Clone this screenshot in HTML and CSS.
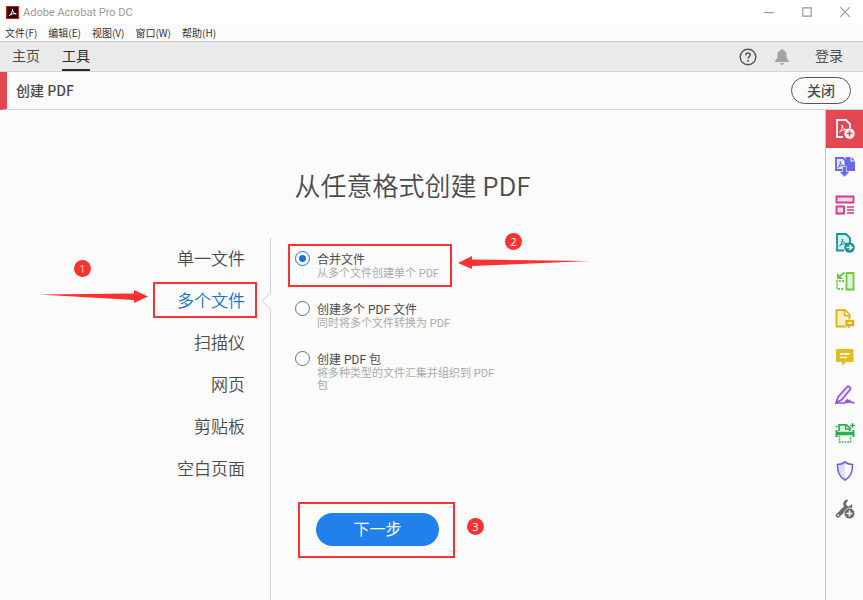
FILE: index.html
```html
<!DOCTYPE html>
<html lang="zh-CN">

<head>
	<meta charset="UTF-8">
	<meta name="viewport" content="width=device-width, initial-scale=1.0">
	<title>Adobe Acrobat Pro DC</title>
	<link rel="stylesheet" href="styles.css">
</head>

<body>
	<header class="titlebar">
		<svg class="app-logo" viewBox="0 0 13 13" aria-hidden="true">
			<rect x=".5" y=".5" width="12" height="12" fill="#2a0808" stroke="#d3201f" />
			<path d="M3 10c2-1.500 3.800-4.400 3.500-7C6 5.500 8.500 8 10.300 8 8.500 7.100 5 7.800 3 10z" fill="none" stroke="#fff" />
		</svg>
		<span class="app-name">Adobe Acrobat Pro DC</span>
		<div class="window-buttons">
			<button type="button" aria-label="最小化"><svg viewBox="0 0 10 10"><path d="M1 5.500h8" /></svg></button>
			<button type="button" aria-label="最大化"><svg viewBox="0 0 10 10"><path d="M1.500 1.500h7v7h-7z" /></svg></button>
			<button type="button" aria-label="关闭窗口"><svg viewBox="0 0 10 10"><path d="M1 1l8 8M9 1L1 9" /></svg></button>
		</div>
	</header>

	<nav class="menubar">
		<button type="button">文件(F)</button>
		<button type="button">编辑(E)</button>
		<button type="button">视图(V)</button>
		<button type="button">窗口(W)</button>
		<button type="button">帮助(H)</button>
	</nav>

	<div class="tabs">
		<a href="#" class="tab">主页</a>
		<a href="#" class="tab active">工具</a>
		<div class="account">
			<button type="button" class="icon-button" aria-label="帮助">
				<svg viewBox="0 0 18 18">
					<circle cx="9" cy="9" r="7.800" fill="none" stroke="#555" stroke-width="1.400" />
					<path d="M6.900 7.200c0-2.900 4.300-2.700 4.300-.2 0 1.500-2.200 1.700-2.200 3.500" fill="none" stroke="#555" stroke-width="1.500" />
					<circle cx="9" cy="12.700" r="1" fill="#555" />
				</svg>
			</button>
			<button type="button" class="icon-button" aria-label="通知">
				<svg viewBox="0 0 18 18">
					<path d="M9 1c-.8 0-1.300.5-1.300 1.300C5.300 2.900 4.500 4.800 4.500 7c0 3.500-.9 4.800-2.500 6v1h14v-1c-1.600-1.200-2.500-2.500-2.500-6 0-2.200-.8-4.100-3.200-4.700C10.300 1.500 9.800 1 9 1zM7.200 15h3.600c0 2.500-3.600 2.500-3.600 0z" fill="#a3a3a3" />
				</svg>
			</button>
			<a href="#" class="login">登录</a>
		</div>
	</div>

	<div class="toolbar">
		<h2>创建 PDF</h2>
		<button type="button" class="close-button">关闭</button>
	</div>

	<main>
		<section class="workspace">
			<h1>从任意格式创建 PDF</h1>
			<div class="columns">
				<nav class="sources">
					<a href="#">单一文件</a>
					<a href="#" class="selected">多个文件
						<span class="mark mark-source"></span>
						<span class="badge badge-source">1</span>
						<svg class="arrow arrow-source" viewBox="0 0 110 14" aria-hidden="true"><path d="M0 4.500L95 3.500V0l14 6.500L95 13V10z" /></svg>
						<svg class="notch" viewBox="0 0 10 18" aria-hidden="true"><path d="M9.500 0v1L1 9l8.500 8v1" /></svg>
					</a>
					<a href="#">扫描仪</a>
					<a href="#">网页</a>
					<a href="#">剪贴板</a>
					<a href="#">空白页面</a>
				</nav>
				<form class="options">
					<div class="option">
						<input type="radio" name="mode" id="merge" checked>
						<label for="merge">合并文件 <small>从多个文件创建单个 PDF</small></label>
						<span class="mark mark-option"></span>
						<span class="badge badge-option">2</span>
						<svg class="arrow arrow-option" viewBox="0 0 132 14" aria-hidden="true"><path d="M132 5L14 3.500V0L0 7l14 6V10z" /></svg>
					</div>
					<div class="option">
						<input type="radio" name="mode" id="multiple">
						<label for="multiple">创建多个 PDF 文件 <small>同时将多个文件转换为 PDF</small></label>
					</div>
					<div class="option">
						<input type="radio" name="mode" id="portfolio">
						<label for="portfolio">创建 PDF 包 <small>将多种类型的文件汇集并组织到 PDF 包</small></label>
					</div>
					<div class="next">
						<button type="submit">下一步</button>
						<span class="mark mark-next"></span>
						<span class="badge badge-next">3</span>
					</div>
				</form>
			</div>
		</section>

		<aside class="tools">
			<button type="button" class="current" aria-label="创建 PDF">
				<svg viewBox="0 0 20 20" stroke="#fff" fill="none">
					<path d="M8 18H2V1h9l4 4v4" stroke-width="1.800" />
					<path d="M4.500 13c2-1.500 3-4 2.700-7 .3 3 2 4.600 4.800 4.800-3-.3-5.500.4-7.500 2.200z" />
					<circle cx="14.500" cy="14.500" r="5.200" fill="#fff" stroke="none" />
					<path d="M14.500 11.500v6M11.500 14.500h6" stroke="#e34850" stroke-width="1.600" />
				</svg>
			</button>
			<button type="button" aria-label="导出 PDF">
				<svg viewBox="0 0 20 20" stroke="#6767ec" fill="none">
					<path d="M10.500 0h5v4.500H20V14h-9.500z" fill="#6767ec" stroke="none" />
					<path d="M16.500 0L20 3.500h-3.500z" fill="#6767ec" stroke="none" />
					<path d="M1 1h7l2.500 2.500V13H1z" fill="#e8e8fc" stroke-width="1.800" />
					<path d="M3 10.500c1.600-1.200 2.500-3.500 2.200-6C5.500 7 7 8.500 9 8.700 7 8.400 5 8.900 3 10.500z" />
					<path d="M7.500 9.500h4v5h3.500l-5.500 5.500L4 14.500h3.500z" fill="#6767ec" stroke="#fbfbfb" stroke-width=".6" />
				</svg>
			</button>
			<button type="button" aria-label="组织页面">
				<svg viewBox="0 0 20 20" stroke="#d83790" fill="#f9dcea">
					<path d="M1.500 1.500h17v6h-17zM1.500 11.500h7.500v7h-7.500z" stroke-width="1.800" />
					<path d="M12 12h7M12 15h7M12 18h7" stroke-width="1.300" />
				</svg>
			</button>
			<button type="button" aria-label="发送以供审阅">
				<svg viewBox="0 0 20 20" stroke="#12959a" fill="none">
					<path d="M9 17.500H2V1h9l4 4v5" fill="#d5eeee" stroke-width="1.800" />
					<path d="M4.500 13c2-1.500 3-4 2.700-7 .3 3 2 4.600 4.800 4.800-3-.3-5.500.4-7.500 2.200z" />
					<circle cx="14.500" cy="14.500" r="5.200" fill="#12959a" stroke="none" />
					<path d="M11.500 14.500h5M14.500 12l2.500 2.500-2.500 2.500" stroke="#fff" stroke-width="1.500" />
				</svg>
			</button>
			<button type="button" aria-label="比较文件">
				<svg viewBox="0 0 20 20" stroke="#6fc83e" fill="none">
					<path d="M11.500 2h7v16.500h-7z" fill="#def5cf" stroke-width="1.800" />
					<path d="M9 10H2v8h7" stroke-width="1.800" stroke-dasharray="2 1.200" />
					<path d="M9.500 1.500L5 5" stroke-width="2" />
					<path d="M2 2v6h6.500z" fill="#6fc83e" stroke="none" />
				</svg>
			</button>
			<button type="button" aria-label="合并文件">
				<svg viewBox="0 0 20 20" stroke="#d9b20c" fill="#f9efc3">
					<path d="M1.500 1.200h8.500l4.500 4.500V17.500h-13z" stroke-width="1.800" />
					<path d="M9.500 1.500v5h5" fill="#fff" stroke-width="1.500" />
					<path d="M10 10.500h9.500v7h-4.500l-2.500 2.500v-2.500h-2.500z" fill="#d9b20c" stroke="#fbfbfb" stroke-width=".6" />
					<path d="M12.500 14h4.500" stroke="#fff" stroke-width="1.500" />
				</svg>
			</button>
			<button type="button" aria-label="注释">
				<svg viewBox="0 0 20 20">
					<path d="M2 2h15.500c.8 0 1 .4 1 1v11c0 .7-.4 1-1 1H11l-4 4v-4H2c-.7 0-1-.4-1-1V3c0-.6.3-1 1-1z" fill="#e1bd20" />
					<path d="M5 7h10M5 10.500h7" stroke="#fff" stroke-width="1.400" />
				</svg>
			</button>
			<button type="button" aria-label="填写和签名">
				<svg viewBox="0 0 20 20" stroke="#9256d9" fill="none" stroke-width="1.700">
					<path d="M1 18l2-6L12 2c1.500-1.500 4.500.5 3 2.700L7 14.500z" fill="#eee3fa" />
					<path d="M1 18h9c1-2 2-3.500 2.500-3 .6.600-.8 2.500 0 2.500s1.200-2.200 2-2.200-.3 2.200.5 2.200 1-.5 1.800-.5.500 1 2.700 1" />
				</svg>
			</button>
			<button type="button" aria-label="扫描和 OCR">
				<svg viewBox="0 0 20 20" stroke="#2eae4e" fill="none">
					<path d="M4 8V1.800h7.500l3.500 3.200v3" fill="#d8f2de" stroke-width="1.700" />
					<path d="M10.500 2v4h4" stroke-width="1.300" />
					<path d="M1.500 7v7M18.500 7v7" stroke-width="2" />
					<path d="M1 10.500h18" stroke-width="3.600" />
					<path d="M4.500 13v6h11v-6" stroke-width="1.600" stroke-dasharray="1.600 1.200" />
					<path d="M17.500 0v5M15 2.500h5M.5 3.500h2" stroke-width="1.300" />
				</svg>
			</button>
			<button type="button" aria-label="保护">
				<svg viewBox="0 0 20 20">
					<path d="M10 1c2.200 1.700 4.500 2.500 7.500 2.500 0 7.500-1.500 12-7.500 15.500-6-3.500-7.500-8-7.500-15.500C5.500 3.500 7.800 2.700 10 1z" fill="#fbfbfb" />
					<path d="M10 1v18c-6-3.500-7.500-8-7.500-15.500C5.500 3.500 7.800 2.700 10 1z" fill="#dedefb" />
					<path d="M10 1c2.200 1.700 4.500 2.500 7.500 2.500 0 7.500-1.500 12-7.500 15.500-6-3.500-7.500-8-7.500-15.500C5.500 3.500 7.800 2.700 10 1z" fill="none" stroke="#6767ec" stroke-width="1.600" />
				</svg>
			</button>
			<button type="button" aria-label="更多工具">
				<svg viewBox="0 0 20 20">
					<path d="M3 16.500l8-8" stroke="#6a6a6a" stroke-width="4.400" stroke-linecap="round" />
					<path d="M13.500.5C10 0 7.500 3 8.500 6.500l4.500 4c3 .5 5-2.500 4-5.500l-3 2.500-2.500-.8-.5-2.500z" fill="#6a6a6a" />
					<circle cx="3.300" cy="16.200" r=".9" fill="#fbfbfb" />
					<circle cx="14.500" cy="14.500" r="5.400" fill="#6a6a6a" stroke="#fbfbfb" stroke-width=".8" />
					<path d="M14.500 11.500v6M11.500 14.500h6" stroke="#fff" stroke-width="1.600" />
				</svg>
			</button>
		</aside>
	</main>
</body>

</html>
```
FILE: styles.css
```css
* {
	box-sizing: border-box;
}

body {
	display: flex;
	flex-direction: column;
	min-height: 100vh;
	margin: 0;
	background-color: #fbfbfb;
	color: #4b4b4b;
	font-family: "Noto Sans CJK SC", sans-serif;
	font-size: 12px;
}

button {
	padding: 0;
	border: none;
	background: none;
	color: inherit;
	font-family: inherit;
	cursor: pointer;
}

a {
	color: inherit;
	text-decoration: none;
}

svg {
	display: block;
}

/* Window chrome */
.titlebar {
	display: flex;
	align-items: center;
	height: 24px;
	padding: 0 12px 0 6px;
	background-color: #fff;
}

.app-logo {
	width: 13px;
	height: 13px;
}

.app-name {
	margin-left: 4px;
	color: #999;
	font-family: Roboto, sans-serif;
	font-size: 11px;
}

.window-buttons {
	display: flex;
	gap: 26px;
	margin-left: auto;
}

.window-buttons svg {
	width: 12px;
	height: 12px;
	fill: none;
	stroke: #999;
}

.menubar {
	display: flex;
	gap: 11px;
	height: 17px;
	padding: 0 5px;
}

.menubar button {
	color: #333;
	font-size: 10px;
	line-height: 16px;
}

.tabs {
	display: flex;
	align-items: center;
	gap: 22px;
	height: 31px;
	padding: 0 20px 0 12px;
	border-top: 1px solid #c8c8c8;
	border-bottom: 1px solid #d4d4d4;
	background-color: #eaeaea;
	font-size: 14px;
}

.tab {
	height: 29px;
	line-height: 27px;
}

.tab.active {
	border-bottom: 2px solid #2c2c2c;
	color: #2c2c2c;
}

.account {
	display: flex;
	align-items: center;
	gap: 16px;
	height: 29px;
	margin-left: auto;
	line-height: 27px;
}

.icon-button svg {
	width: 18px;
	height: 18px;
}

.login {
	height: 29px;
	margin-left: 8px;
}

.toolbar {
	display: flex;
	align-items: center;
	justify-content: space-between;
	height: 38px;
	padding: 0 12px 0 9px;
	border-left: 7px solid #e34850;
	border-bottom: 1px solid #d4d4d4;
}

.toolbar h2 {
	margin: 0;
	padding-bottom: 2px;
	font-size: 14px;
	font-weight: 500;
	line-height: 20px;
}

.close-button {
	width: 60px;
	height: 27px;
	padding-bottom: 2px;
	border: 1px solid #555;
	border-radius: 14px;
	font-size: 14px;
	font-weight: 500;
	line-height: 22px;
}

/* Main area */
main {
	display: flex;
	flex: 1;
}

.workspace {
	display: flex;
	flex: 1;
	flex-direction: column;
}

h1 {
	margin: 0;
	padding: 55px 0 33px;
	font-size: 26px;
	font-weight: 350;
	line-height: 40px;
	text-align: center;
}

.columns {
	display: flex;
	flex: 1;
}

.sources {
	display: flex;
	flex-direction: column;
	width: 271px;
	border-right: 1px solid #d0d0d0;
	font-size: 17px;
	font-weight: 350;
	text-align: right;
}

.sources a {
	position: relative;
	height: 42px;
	padding-right: 25px;
	line-height: 40px;
}

.sources .selected {
	color: #1473d0;
}

.notch {
	position: absolute;
	top: 12px;
	right: -1px;
	width: 10px;
	height: 18px;
	background-color: #fbfbfb;
	fill: none;
	stroke: #d0d0d0;
}

.options {
	padding: 13px 24px 0;
	font-family: Roboto, "Noto Sans CJK SC", sans-serif;
}

.option {
	display: flex;
	position: relative;
	gap: 7px;
	margin-bottom: 21px;
}

.option input {
	flex: none;
	width: 15px;
	height: 15px;
	margin: 0;
	border: 1px solid #707070;
	border-radius: 50%;
	appearance: none;
}

.option input:checked {
	border-color: #1473d0;
	background: radial-gradient(circle, #1473d0 3px, transparent 4px);
}

.option label {
	max-width: 182px;
	padding-top: 1px;
	line-height: 16px;
}

.option small {
	display: block;
	color: #aaa;
	font-size: 11px;
	line-height: 12px;
}

.next {
	position: relative;
	width: 123px;
	margin: 121px 0 0 21px;
}

.next button {
	width: 100%;
	height: 33px;
	border-radius: 17px;
	background-color: #2080ec;
	color: #fff;
	font-size: 16px;
	line-height: 32px;
}

/* Numbered step marks */
.mark {
	position: absolute;
	border: 2px solid #fb3131;
	pointer-events: none;
}

.mark-source {
	top: 2px;
	right: 13px;
	width: 104px;
	height: 36px;
}

.mark-option {
	top: -7px;
	left: -7px;
	width: 164px;
	height: 43px;
}

.mark-next {
	top: -11px;
	left: -18px;
	width: 157px;
	height: 56px;
}

.badge {
	position: absolute;
	width: 17px;
	height: 17px;
	border-radius: 50%;
	background-color: #fb3131;
	color: #fff;
	font-family: "Noto Sans", sans-serif;
	font-size: 11px;
	line-height: 17px;
	text-align: center;
}

.badge-source {
	top: -20px;
	left: 74px;
}

.badge-option {
	top: -18px;
	left: 210px;
}

.badge-next {
	top: 5px;
	left: 151px;
}

.arrow {
	position: absolute;
	height: 14px;
	fill: #fb3131;
}

.arrow-source {
	top: 10px;
	left: 39px;
	width: 110px;
}

.arrow-option {
	top: 5px;
	left: 163px;
	width: 132px;
}

/* Tool strip */
.tools {
	display: flex;
	flex-direction: column;
	width: 38px;
	border-left: 1px solid #c8c8c8;
}

.tools button {
	display: flex;
	align-items: center;
	justify-content: center;
	height: 38px;
}

.tools .current {
	background-color: #e34850;
}

.tools svg {
	width: 20px;
	height: 20px;
}
```
